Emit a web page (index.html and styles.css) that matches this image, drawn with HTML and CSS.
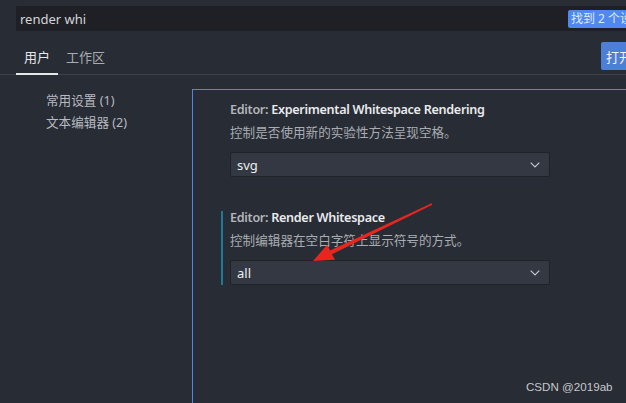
FILE: index.html
```html
<!DOCTYPE html>
<html lang="zh">
<head>
<meta charset="utf-8">
<title>Settings</title>
<link rel="stylesheet" href="styles.css">
</head>
<body>
<div class="page">
  <div class="top">
    <div class="search">
      <span class="query">render whi</span>
      <span class="badge">找到 2 个设置</span>
    </div>
  </div>
  <div class="tabs">
    <div class="tab active">用户</div>
    <div class="tab">工作区</div>
    <button class="open">打开设置(json)</button>
  </div>
  <div class="main">
    <nav class="nav">
      <div class="nav-item">常用设置 (1)</div>
      <div class="nav-item">文本编辑器 (2)</div>
    </nav>
    <section class="panel">
      <div class="setting">
        <div class="title"><span class="cat">Editor: </span>Experimental Whitespace Rendering</div>
        <div class="desc">控制是否使用新的实验性方法呈现空格。</div>
        <div class="select"><span>svg</span><svg class="chev" width="10" height="6" viewBox="0 0 10 6"><path d="M0.7 0.7 L5 5 L9.3 0.7" fill="none" stroke="#c5c8cc" stroke-width="1.2"/></svg></div>
      </div>
      <div class="setting focused">
        <div class="title"><span class="cat">Editor: </span>Render Whitespace</div>
        <div class="desc">控制编辑器在空白字符上显示符号的方式。</div>
        <div class="select"><span>all</span><svg class="chev" width="10" height="6" viewBox="0 0 10 6"><path d="M0.7 0.7 L5 5 L9.3 0.7" fill="none" stroke="#c5c8cc" stroke-width="1.2"/></svg></div>
      </div>
    </section>
  </div>
  <svg class="arrow" width="626" height="403" viewBox="0 0 626 403">
    <polygon points="431.6,203.3 330.1,250.6 327.2,244.8 313,261 335,259.8 331.9,254.2 432.4,204.7" fill="#e8261f"/>
  </svg>
  <div class="watermark">CSDN @2019ab</div>
</div>
</body>
</html>
```
FILE: styles.css
```css
html, body {
  margin: 0;
  padding: 0;
  background: #282c34;
  overflow: hidden;
}
.page {
  position: relative;
  width: 626px;
  height: 403px;
  overflow: hidden;
  font-family: "Noto Sans", "Noto Sans CJK SC", sans-serif;
  font-size: 12.6px;
  color: #b9bcc1;
}
.top {
  padding: 6px 0 0 16px;
}
.search {
  display: flex;
  align-items: center;
  width: 635px;
  height: 25px;
  box-sizing: border-box;
  background: #1e2025;
  border-radius: 2px;
  padding: 0 4px;
}
.query {
  flex: 1;
  color: #d4d6d9;
  font-size: 13px;
}
.badge {
  background: #5188ef;
  color: #dfe8fb;
  font-size: 12px;
  line-height: 18px;
  padding: 0 3px;
  border-radius: 2px;
  white-space: nowrap;
}
.tabs {
  display: flex;
  align-items: flex-start;
  width: 720px;
  margin-top: 11px;
  border-bottom: 1px solid #3c4048;
  height: 32px;
}
.tab {
  height: 31px;
  line-height: 31px;
  padding: 0 8px;
  border-bottom: 2px solid transparent;
  color: #a9adb3;
  font-size: 13px;
}
.tabs .tab:first-child {
  margin-left: 16px;
}
.tab.active {
  color: #e4e6e9;
  border-bottom-color: #e6e7e9;
}
.open {
  margin-left: 488px;
  height: 28px;
  padding: 0 5px;
  border: none;
  border-radius: 2px;
  background: #4d7fd6;
  color: #f2f4f8;
  font-family: inherit;
  font-size: 13px;
  white-space: nowrap;
}
.main {
  display: flex;
  padding-top: 14px;
}
.nav {
  width: 192px;
  flex: none;
  padding: 1px 0 0 46px;
  box-sizing: border-box;
}
.nav-item {
  line-height: 22px;
  color: #b7bac0;
  white-space: nowrap;
}
.panel {
  flex: 1;
  height: 320px;
  border-top: 1px solid #4a86ec;
  border-left: 1px solid #4a86ec;
  padding: 13px 0 0 28px;
}
.setting {
  border-left: 2px solid transparent;
  padding-left: 7px;
  margin-bottom: 34px;
}
.setting.focused {
  border-left-color: #1d7a99;
}
.title {
  line-height: 14px;
  font-weight: 600;
  letter-spacing: -0.3px;
  color: #e9ebee;
  white-space: nowrap;
}
.title .cat {
  color: #b3b6bb;
}
.desc {
  margin-top: 6px;
  line-height: 20px;
  color: #a9adb3;
}
.select {
  margin-top: 9px;
  width: 320px;
  height: 25px;
  box-sizing: border-box;
  background: #333842;
  border: 1px solid #1f2227;
  border-radius: 2px;
  display: flex;
  align-items: center;
  justify-content: space-between;
  padding: 0 9px 0 6px;
  color: #eceef0;
  font-size: 13px;
}
.chev {
  display: block;
}
.arrow {
  position: absolute;
  left: 0;
  top: 0;
  pointer-events: none;
}
.watermark {
  position: absolute;
  left: 526px;
  top: 380px;
  font-family: "Liberation Sans", sans-serif;
  font-size: 11.6px;
  color: #c6c8cc;
  white-space: nowrap;
}
```
